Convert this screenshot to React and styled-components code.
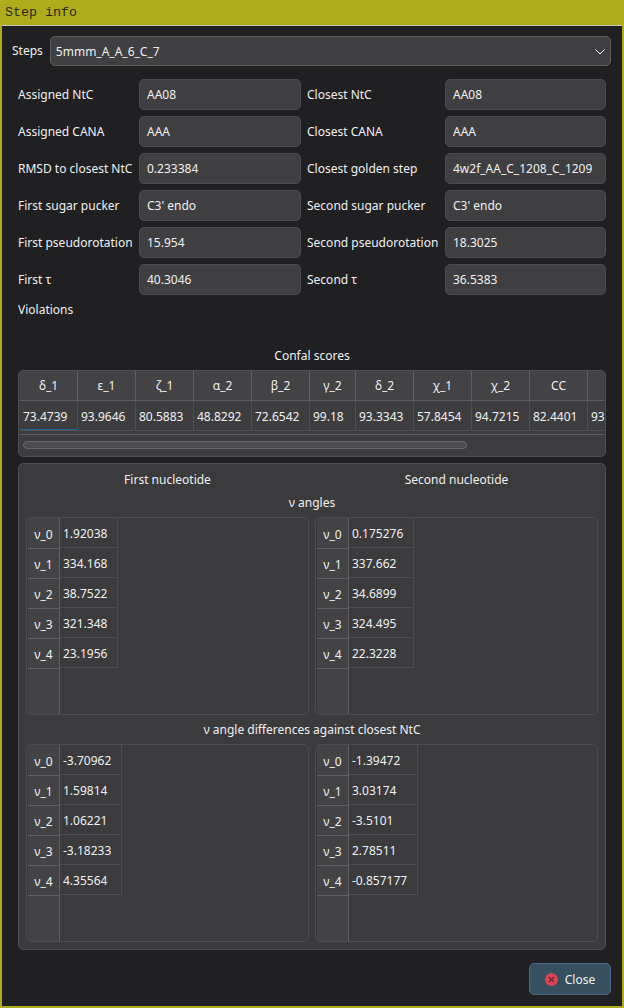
import React from "react";
import styled, { createGlobalStyle } from "styled-components";

const GlobalStyle = createGlobalStyle`
  html, body { margin: 0; padding: 0; background: #aeac1a; }
  #root { width: 624px; height: 1008px; overflow: hidden; }
`;

const fields = [
  ["Assigned NtC", "AA08", "Closest NtC", "AA08"],
  ["Assigned CANA", "AAA", "Closest CANA", "AAA"],
  ["RMSD to closest NtC", "0.233384", "Closest golden step", "4w2f_AA_C_1208_C_1209"],
  ["First sugar pucker", "C3' endo", "Second sugar pucker", "C3' endo"],
  ["First pseudorotation", "15.954", "Second pseudorotation", "18.3025"],
  ["First τ", "40.3046", "Second τ", "36.5383"],
];

// w is only set where the column is narrower than the default
const confal = [
  { name: "δ_1", value: "73.4739" },
  { name: "ε_1", value: "93.9646" },
  { name: "ζ_1", value: "80.5883" },
  { name: "α_2", value: "48.8292" },
  { name: "β_2", value: "72.6542" },
  { name: "γ_2", value: "99.18", w: 46 },
  { name: "δ_2", value: "93.3343" },
  { name: "χ_1", value: "57.8454" },
  { name: "χ_2", value: "94.7215" },
  { name: "CC", value: "82.4401" },
  { name: "", value: "93" },
];

const NU = ["ν_0", "ν_1", "ν_2", "ν_3", "ν_4"];

const Window = styled.div`
  width: 624px;
  height: 1008px;
  display: flex;
  flex-direction: column;
  font-family: "Noto Sans", sans-serif;
  font-size: 12px;
  color: #eff0f1;
`;

const TitleBar = styled.div`
  height: 25px;
  flex: none;
  padding-left: 5px;
  font-family: "Liberation Mono", monospace;
  font-size: 13.33px;
  line-height: 25px;
  color: #2a2a14;
  background: #aeac1a;
`;

const Body = styled.div`
  flex: 1;
  margin: 0 2px 2px;
  padding: 10px 11px 11px 10px;
  border-top: 1px solid #c9c9b8;
  background: #201f21;
  display: flex;
  flex-direction: column;
`;

const StepsRow = styled.div`
  display: flex;
  align-items: center;
  gap: 7px;
  height: 30px;
`;

const StepsLabel = styled.span`
  margin-top: -2px;
`;

const Combo = styled.div`
  flex: 1;
  height: 30px;
  box-sizing: border-box;
  padding: 1px 5px 0;
  display: flex;
  align-items: center;
  justify-content: space-between;
  background: #403f41;
  border: 1px solid #5f5f60;
  border-radius: 5px;
`;

const FieldGrid = styled.div`
  margin: 13px 5px 0 6px;
  display: grid;
  grid-template-columns: 121px 162px 144px 161px;
  grid-auto-rows: 31px;
  row-gap: 6px;
  align-items: center;
`;

const FieldLabel = styled.div`
  white-space: nowrap;
  padding-left: ${(p) => (p.$second ? "6px" : "0")};
`;

const FieldValue = styled.div`
  height: 31px;
  box-sizing: border-box;
  padding: 0 7px;
  line-height: 29px;
  white-space: nowrap;
  overflow: hidden;
  background: #3f3e40;
  border: 1px solid #4c4b4d;
  border-radius: 5px;
`;

const Violations = styled.div`
  margin: 6px 0 0 6px;
  height: 17px;
  line-height: 17px;
`;

const Heading = styled.div`
  text-align: center;
  height: 17px;
  line-height: 17px;
`;

const ConfalHeading = styled(Heading)`
  margin: 29px 0 6px;
  padding-left: 1px;
`;

const ConfalBox = styled.div`
  margin: 0 5px 0 6px;
  height: 87px;
  box-sizing: border-box;
  background: #3d3c3e;
  border: 1px solid #4f4e50;
  border-radius: 5px;
  overflow: hidden;
  padding: 0 1px;
`;

const ConfalRow = styled.div`
  display: flex;
  height: 29px;
  overflow: hidden;
  border-bottom: 1px solid ${(p) => (p.$head ? "#605f61" : "#4f4e50")};
  background: ${(p) => (p.$head ? "#434244" : "#3d3c3e")};
`;

const ConfalHeadCell = styled.div`
  flex: none;
  width: ${(p) => p.$w || 58}px;
  box-sizing: border-box;
  text-align: center;
  white-space: nowrap;
  border-right: 1px solid #605f61;
  line-height: 30px;
`;

const ConfalValueCell = styled.div`
  flex: none;
  width: ${(p) => p.$w || 58}px;
  box-sizing: border-box;
  padding: 2px 0 0 3px;
  white-space: nowrap;
  border-right: 1px solid #4f4e50;
  line-height: 28px;
  box-shadow: ${(p) => (p.$current ? "inset 0 -1px 0 #1d6a9c" : "none")};
`;

const ScrollArea = styled.div`
  height: 16px;
  padding: 6px 4px 0 3px;
  margin-top: 3px;
  border-top: 1px solid #605f61;
`;

const ScrollThumb = styled.div`
  width: 444px;
  height: 8px;
  box-sizing: border-box;
  background: #4d4c4e;
  border: 1px solid #68676a;
  border-radius: 4px;
`;

const NucleotideGroup = styled.div`
  margin: 6px 5px 0 6px;
  height: 487px;
  box-sizing: border-box;
  padding: 7px;
  background: #3b3a3c;
  border: 1px solid #4f4e50;
  border-radius: 5px;
  display: flex;
  flex-direction: column;
`;

const TablePair = styled.div`
  display: grid;
  grid-template-columns: 283px 283px;
  column-gap: 6px;
`;

const NucleotideHead = styled(TablePair)`
  text-align: center;
  height: 17px;
  line-height: 17px;
`;

const AngleHeading = styled(Heading)`
  margin: ${(p) => p.$mt}px 0 6px;
`;

const AngleTable = styled.div`
  height: 198px;
  box-sizing: border-box;
  display: flex;
  background: #3b3a3c;
  border: 1px solid #4c4b4d;
  border-radius: 5px;
  overflow: hidden;
  padding-left: 1px;
`;

const AngleHeader = styled.div`
  flex: none;
  width: 31px;
  padding-top: 1px;
  background: #434244;
  border-right: 1px solid #605f61;
`;

const AngleHeaderCell = styled.div`
  height: 27px;
  padding-top: 2px;
  text-align: center;
  line-height: 28px;
  border-bottom: 1px solid #605f61;
`;

const AngleValues = styled.div`
  flex: none;
  width: ${(p) => p.$w}px;
  align-self: flex-start;
`;

const AngleValueCell = styled.div`
  height: 27px;
  padding: 2px 0 0 3px;
  line-height: 27px;
  border-bottom: 1px solid #4c4b4d;
  border-right: 1px solid #4c4b4d;
`;

const Footer = styled.div`
  margin-top: auto;
  display: flex;
  justify-content: flex-end;
`;

const CloseButton = styled.button`
  width: 82px;
  height: 32px;
  display: flex;
  align-items: center;
  justify-content: center;
  gap: 7px;
  padding: 0;
  font: inherit;
  color: inherit;
  background: #36505f;
  border: 1px solid #436a80;
  border-radius: 5px;
`;

const Chevron = () => (
  <svg width="10" height="6" viewBox="0 0 10 6" fill="none">
    <path d="M0.5 0.5 L5 5 L9.5 0.5" stroke="#eff0f1" strokeWidth="1" />
  </svg>
);

const CloseIcon = () => (
  <svg width="13" height="13" viewBox="0 0 13 13">
    <circle cx="6.5" cy="6.5" r="6.5" fill="#da4453" />
    <path d="M4 4 L9 9 M9 4 L4 9" stroke="#5c2a33" strokeWidth="1.2" />
  </svg>
);

const AngleBlock = ({ values, width }) => (
  <AngleTable>
    <AngleHeader>
      {NU.map((n) => (
        <AngleHeaderCell key={n}>{n}</AngleHeaderCell>
      ))}
    </AngleHeader>
    <AngleValues $w={width}>
      {values.map((v) => (
        <AngleValueCell key={v}>{v}</AngleValueCell>
      ))}
    </AngleValues>
  </AngleTable>
);

const App = () => (
  <>
    <GlobalStyle />
    <Window>
      <TitleBar>Step info</TitleBar>
      <Body>
        <StepsRow>
          <StepsLabel>Steps</StepsLabel>
          <Combo>
            <span>5mmm_A_A_6_C_7</span>
            <Chevron />
          </Combo>
        </StepsRow>
        <FieldGrid>
          {fields.map((f) => (
            <React.Fragment key={f[0]}>
              <FieldLabel>{f[0]}</FieldLabel>
              <FieldValue>{f[1]}</FieldValue>
              <FieldLabel $second>{f[2]}</FieldLabel>
              <FieldValue>{f[3]}</FieldValue>
            </React.Fragment>
          ))}
        </FieldGrid>
        <Violations>Violations</Violations>
        <ConfalHeading>Confal scores</ConfalHeading>
        <ConfalBox>
          <ConfalRow $head>
            {confal.map((c, i) => (
              <ConfalHeadCell key={i} $w={c.w}>{c.name}</ConfalHeadCell>
            ))}
          </ConfalRow>
          <ConfalRow>
            {confal.map((c, i) => (
              <ConfalValueCell key={i} $w={c.w} $current={i === 0}>{c.value}</ConfalValueCell>
            ))}
          </ConfalRow>
          <ScrollArea>
            <ScrollThumb />
          </ScrollArea>
        </ConfalBox>
        <NucleotideGroup>
          <NucleotideHead>
            <span>First nucleotide</span>
            <span>Second nucleotide</span>
          </NucleotideHead>
          <AngleHeading $mt={6}>ν angles</AngleHeading>
          <TablePair>
            <AngleBlock width={58} values={["1.92038", "334.168", "38.7522", "321.348", "23.1956"]} />
            <AngleBlock width={65} values={["0.175276", "337.662", "34.6899", "324.495", "22.3228"]} />
          </TablePair>
          <AngleHeading $mt={6}>ν angle differences against closest NtC</AngleHeading>
          <TablePair>
            <AngleBlock width={62} values={["-3.70962", "1.59814", "1.06221", "-3.18233", "4.35564"]} />
            <AngleBlock width={69} values={["-1.39472", "3.03174", "-3.5101", "2.78511", "-0.857177"]} />
          </TablePair>
        </NucleotideGroup>
        <Footer>
          <CloseButton>
            <CloseIcon />
            <span>Close</span>
          </CloseButton>
        </Footer>
      </Body>
    </Window>
  </>
);

export default App;
